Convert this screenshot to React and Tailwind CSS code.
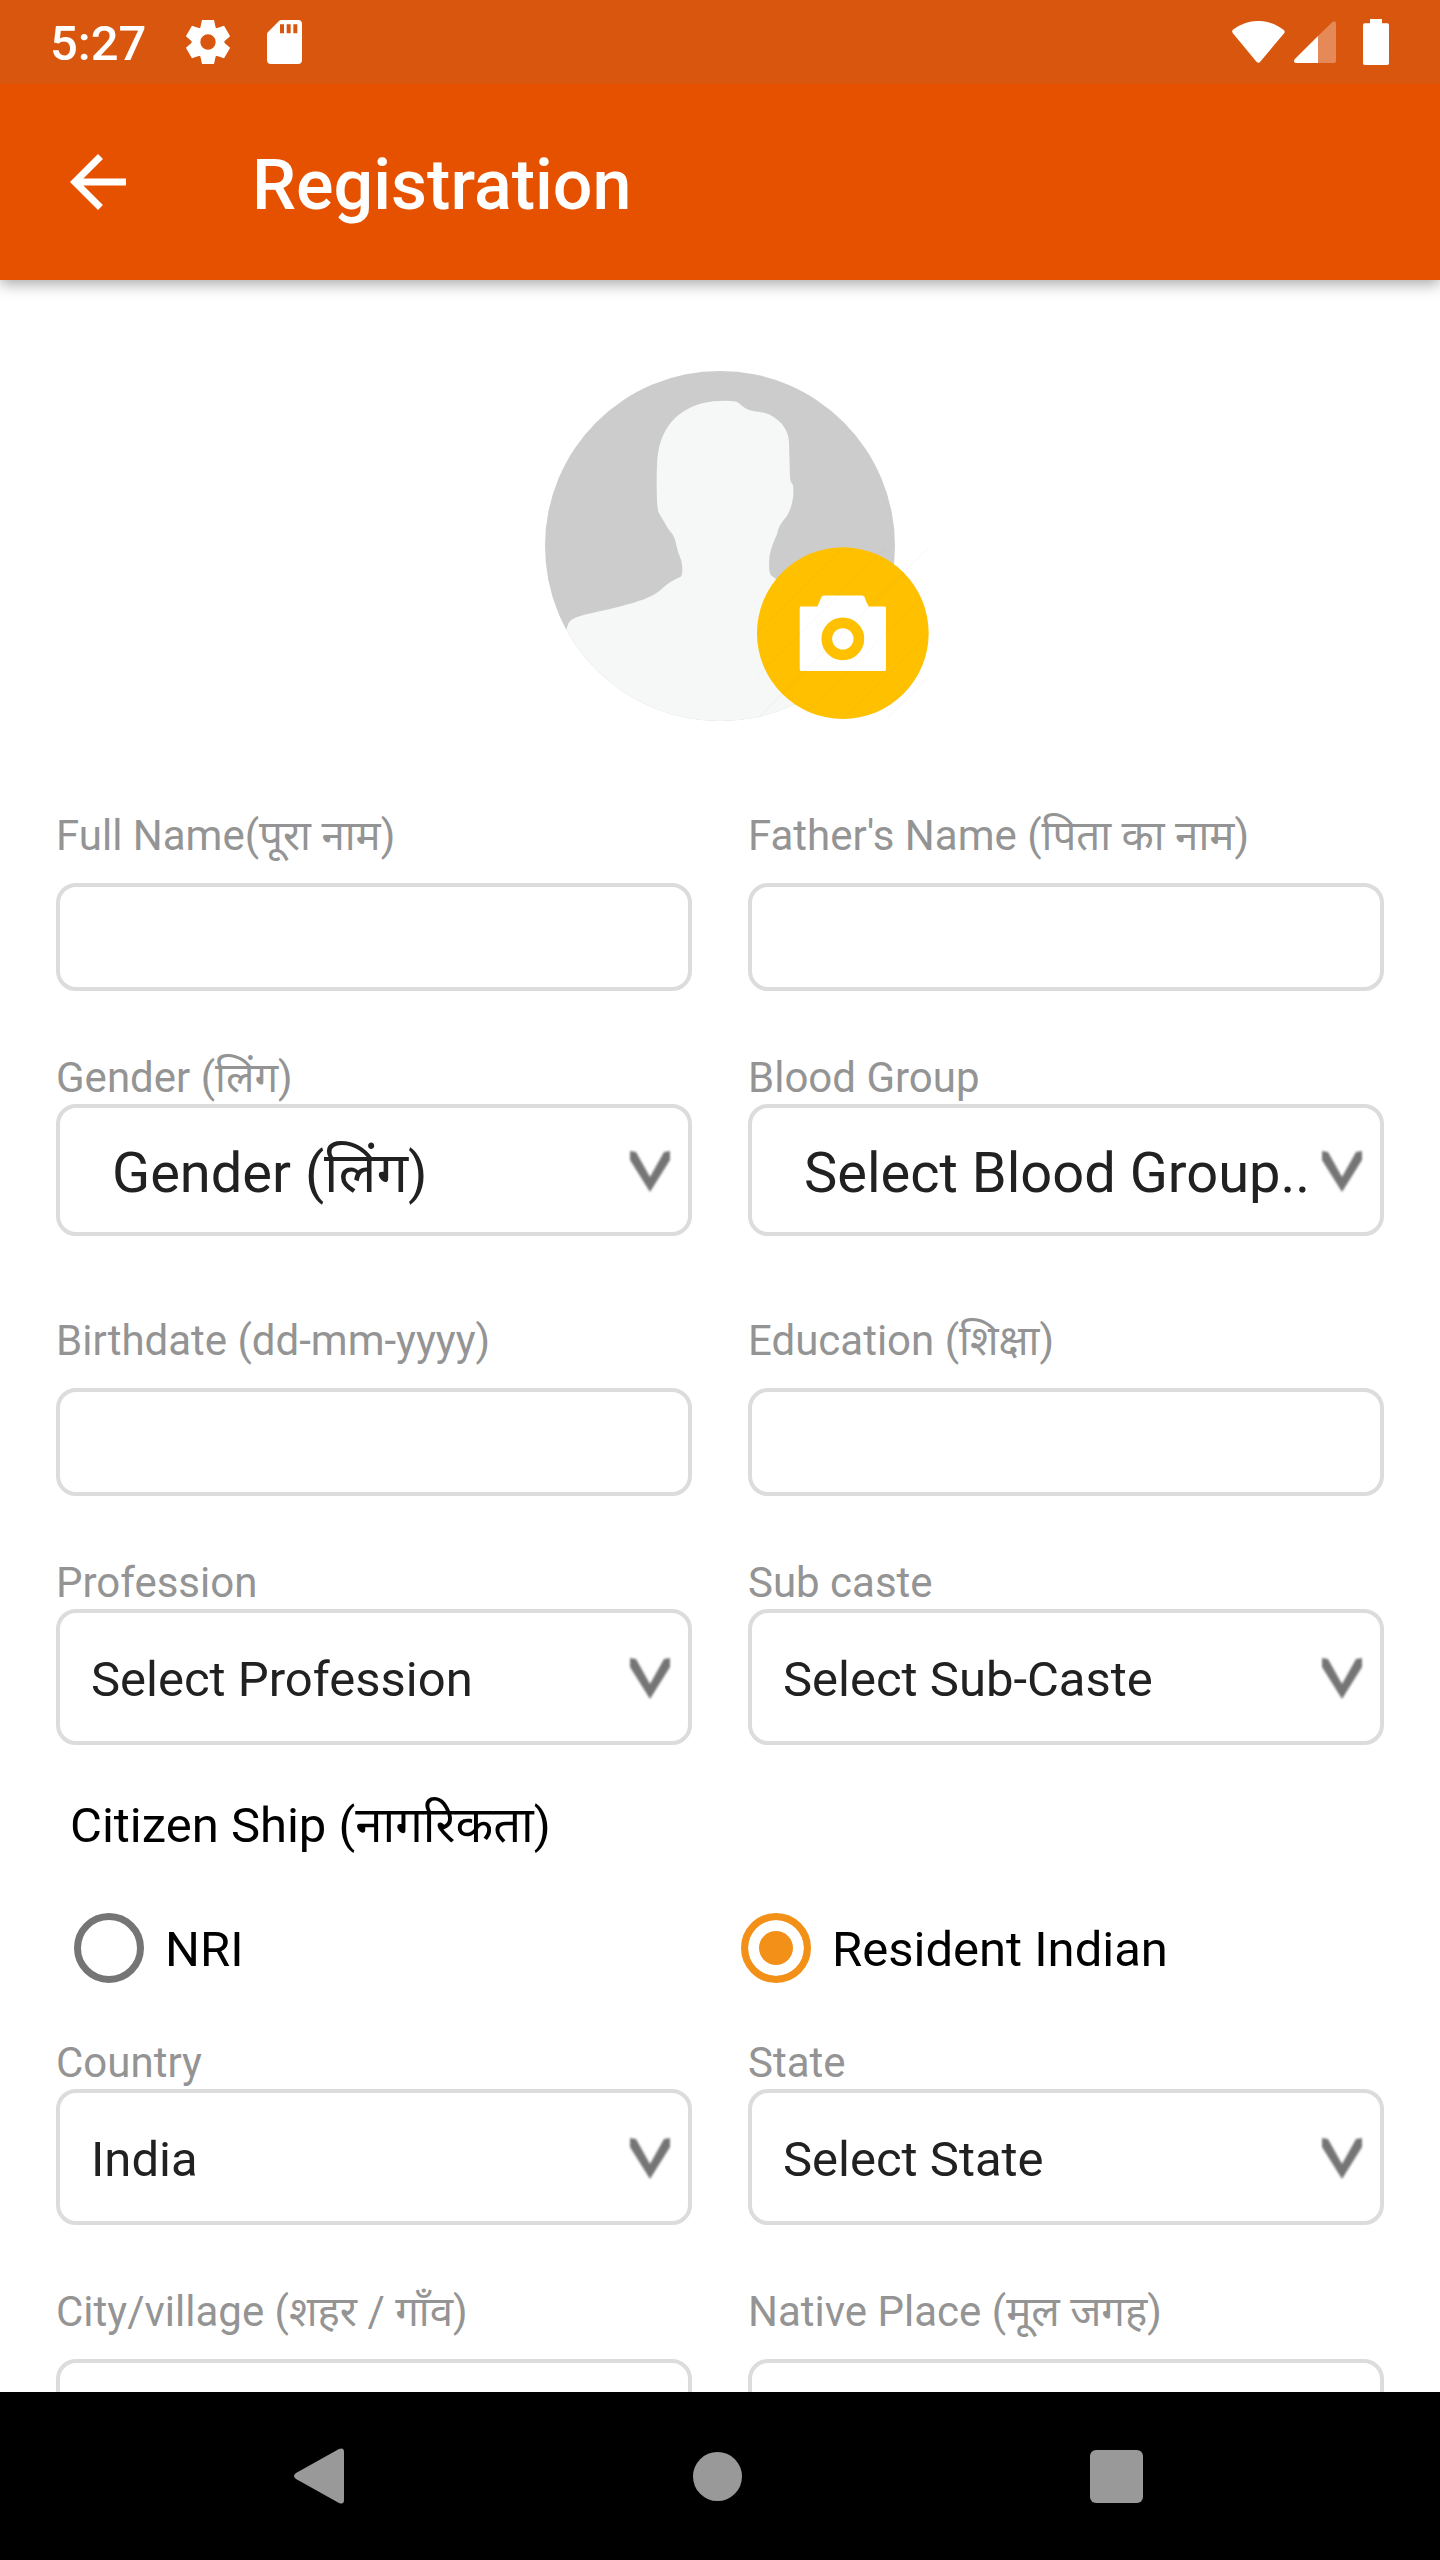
import React from 'react'
import { MdArrowBack } from 'react-icons/md'

const StatusBar = () => (
    <div className="h-21 shrink-0 relative z-20 bg-[#d9560f] text-white flex items-center justify-between pl-[50px] pr-[51px]">
        <div className="flex items-center">
            <span className="pt-1 text-[49px] leading-14 font-medium">5:27</span>
            {/* Settings */}
            <svg className="size-11 ml-10" viewBox="-66 -66 132 132" fill="currentColor">
                <path d="M-14-66H14L18-66L24-38H-24L-18-66ZM-24 38H24L18 66H-18Z" />
                <path d="M-18-66H18L24-38H-24ZM-24 38H24L18 66H-18Z" transform="rotate(60)" />
                <path d="M-18-66H18L24-38H-24ZM-24 38H24L18 66H-18Z" transform="rotate(120)" />
                <circle r="36" fill="none" stroke="currentColor" strokeWidth="26" />
            </svg>
            {/* SD card */}
            <svg className="w-[35px] h-11 ml-[37px]" viewBox="0 0 105 132" fill="currentColor" fillRule="evenodd">
                <path d="M42 0H93Q105 0 105 12V120Q105 132 93 132H12Q0 132 0 120V43Q0 39 3 36L36 3Q39 0 42 0ZM39 13V40H51V13ZM59 13V40H71V13ZM79 13V40H91V13Z" />
            </svg>
        </div>
        <div className="flex items-center">
            {/* Wifi */}
            <svg className="w-[53px] h-[42px]" viewBox="0 0 159 127" fill="currentColor">
                <path d="M3 26C-1 30-1 33 2 37L74 124Q79 129 84 124L157 37C160 33 159 30 156 27C110-9 48-9 3 26Z" />
            </svg>
            {/* Signal */}
            <svg className="w-[42px] h-[42px] ml-[9px]" viewBox="0 0 126 126" fill="currentColor">
                <path d="M72 45L116 2Q126-3 126 8V120Q126 126 120 126H72Z" opacity="0.3" />
                <path d="M72 45V126H6Q-3 124 2 115Z" />
            </svg>
            {/* Battery */}
            <svg className="w-[26px] h-[46px] ml-[27px]" viewBox="0 0 78 138" fill="currentColor">
                <path d="M21 0H57V13H73Q78 13 78 18V133Q78 138 73 138H5Q0 138 0 133V18Q0 13 5 13H21Z" />
            </svg>
        </div>
    </div>
)

const AppBar = () => (
    <header className="h-49 shrink-0 relative z-10 bg-[#e65100] text-white flex items-center pl-14 shadow-[0_4px_14px_rgba(0,0,0,0.35)]">
        <button type="button" aria-label="Back">
            <MdArrowBack className="size-21" />
        </button>
        <h1 className="ml-28 pt-1.5 text-[70px] leading-20 font-medium">Registration</h1>
    </header>
)

const Avatar = () => (
    <div className="relative size-[350px] mx-auto">
        <svg className="size-full" viewBox="76 63 1050 1050">
            <clipPath id="avatar-clip">
                <circle cx="601" cy="588" r="525" />
            </clipPath>
            <g clipPath="url(#avatar-clip)">
                <rect x="76" y="63" width="1050" height="1050" fill="#cccccc" />
                <path
                    fill="#f6f8f7"
                    d="M136 850L147 818Q152 805 200 793C300 770 385 752 420 722C440 702 462 688 483 680Q489 675 488 650Q486 628 476 608C468 580 468 564 455 548Q442 535 436 520L418 490Q411 478 411 400Q411 330 416 305C430 215 500 155 600 153Q645 151 656 158C680 181 695 182 715 185Q735 187 748 193C788 214 806 242 808 275L811 385Q812 395 820 405C825 440 815 478 800 500Q775 528 773 550Q755 590 750 615Q745 664 754 676L800 710L1200 800V1200H76V850Z"
                />
            </g>
        </svg>
        <button type="button" aria-label="Upload photo" className="absolute left-[212px] top-[176px] size-[172px]">
            <svg className="size-full" viewBox="711 592 515 515">
                <circle cx="968" cy="850" r="257" fill="#ffc000" />
                <path
                    fill="#ffffff"
                    d="M843 770H892L904 742Q906 737 912 737H1025Q1031 737 1033 742Q1038 760 1046 770H1093Q1097 770 1097 774V959Q1097 963 1093 963H843Q839 963 839 959V774Q839 770 843 770Z"
                />
                <circle cx="968" cy="867" r="48" fill="none" stroke="#ffc000" strokeWidth="32" />
                <path
                    stroke="#000000"
                    strokeOpacity="0.05"
                    strokeWidth="2"
                    d="M711 850L958 604M711 980L1098 592M711 1107L1226 592M840 1107L1226 720M968 1107L1226 850M1098 1107L1226 980"
                />
            </svg>
        </button>
    </div>
)

const Row = ({ children, className }) => (
    <div className={`grid grid-cols-2 gap-x-14 px-14 ${className || ''}`}>{children}</div>
)

const labelClass = 'block text-[42px] leading-[52px] text-[#949494] whitespace-nowrap'
const boxClass = 'block w-full bg-white border-4 border-[#dcdcdc] rounded-[20px]'

const TextField = ({ id, label }) => (
    <div>
        <label htmlFor={id} className={labelClass}>{label}</label>
        <input id={id} type="text" className={`${boxClass} mt-[21px] h-27 px-6 text-[49px]`} />
    </div>
)

const SelectField = ({ id, label, value, large }) => (
    <div>
        <label htmlFor={id} className={labelClass}>{label}</label>
        <div className="relative">
            <select
                id={id}
                className={`${boxClass} appearance-none pt-1.5 text-[#212121] ${large ? 'h-33 pl-[52px] text-[56px]' : 'h-34 pl-[31px] text-[49px]'}`}
            >
                <option>{value}</option>
            </select>
            <svg
                className="absolute right-[19px] inset-y-0 my-auto w-[46px] h-[52px] pointer-events-none blur-[1px]"
                viewBox="0 0 46 52"
                fill="#757575"
            >
                <path d="M3 7L9 8L23 33L37 8L43 7V16L23 48L3 16Z" />
            </svg>
        </div>
    </div>
)

const RadioOption = ({ label, checked }) => (
    <label className="flex items-center gap-[21px] text-[49px] leading-14">
        <input
            type="radio"
            name="citizenship"
            defaultChecked={checked}
            className="appearance-none size-[70px] rounded-full border-7 border-[#757575] checked:border-[#f29018] checked:bg-[#f29018] checked:shadow-[inset_0_0_0_11px_#ffffff]"
        />
        <span className="pt-1">{label}</span>
    </label>
)

const App = () => {
    return (
        <div
            className="h-screen flex flex-col bg-white text-black"
            style={{ fontFamily: 'Roboto, "Noto Sans", sans-serif' }}
        >
            <StatusBar />
            <AppBar />

            <main className="flex-1 min-h-0 overflow-y-auto [scrollbar-width:none] pt-[91px]">
                <Avatar />

                <form className="mt-[89px] pb-14">
                    <Row>
                        <TextField id="full-name" label="Full Name(पूरा नाम)" />
                        <TextField id="father-name" label="Father's Name (पिता का नाम)" />
                    </Row>
                    <Row className="mt-[61px]">
                        <SelectField id="gender" label="Gender (लिंग)" value="Gender (लिंग)" large />
                        <SelectField id="blood-group" label="Blood Group" value="Select Blood Group.." large />
                    </Row>
                    <Row className="mt-[79px]">
                        <TextField id="birthdate" label="Birthdate (dd-mm-yyyy)" />
                        <TextField id="education" label="Education (शिक्षा)" />
                    </Row>
                    <Row className="mt-[61px]">
                        <SelectField id="profession" label="Profession" value="Select Profession" />
                        <SelectField id="sub-caste" label="Sub caste" value="Select Sub-Caste" />
                    </Row>

                    {/* Citizenship */}
                    <fieldset className="mt-[53px]">
                        <legend className="pl-[70px] text-[49px] leading-14">Citizen Ship (नागरिकता)</legend>
                        <div className="mt-[59px] grid grid-cols-2 pl-[74px] pr-8">
                            <RadioOption label="NRI" />
                            <RadioOption label="Resident Indian" checked />
                        </div>
                    </fieldset>

                    <Row className="mt-[54px]">
                        <SelectField id="country" label="Country" value="India" />
                        <SelectField id="state" label="State" value="Select State" />
                    </Row>
                    <Row className="mt-[61px]">
                        <TextField id="city" label="City/village (शहर / गाँव)" />
                        <TextField id="native-place" label="Native Place (मूल जगह)" />
                    </Row>
                </form>
            </main>

            {/* System navigation */}
            <nav className="h-42 shrink-0 bg-black pl-30 pr-31 grid grid-cols-3 place-items-center text-[#999999]">
                <button type="button" aria-label="System back">
                    <svg className="w-[50px] h-14" viewBox="0 0 50 56" fill="currentColor">
                        <path d="M2 25L45 1Q50-1 50 4V52Q50 57 45 55L2 31Q-2 28 2 25Z" />
                    </svg>
                </button>
                <button type="button" aria-label="Home" className="size-[49px] rounded-full bg-[#999999]"></button>
                <button type="button" aria-label="Recent apps" className="size-[53px] rounded-md bg-[#999999]"></button>
            </nav>
        </div>
    )
}

export default App
